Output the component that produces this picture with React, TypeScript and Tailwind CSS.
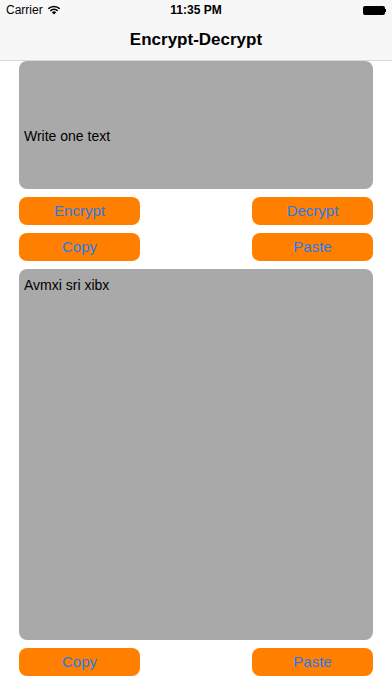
import React from "react";

const font = { fontFamily: '"Helvetica Neue", "Liberation Sans", Arial, sans-serif' };

function Btn({ label }: { label: string }) {
  return (
    <div className="w-[121px] h-[28px] rounded-[8px] bg-[#ff8000] flex items-center justify-center text-[15px] text-[#1f7bf0]">
      {label}
    </div>
  );
}

export default function App() {
  return (
    <div className="w-[392px] h-[696px] bg-white overflow-hidden" style={font}>
      <div className="bg-[#f7f7f7] border-b border-[#d8d8d8] h-[61px] flex flex-col">
        <div className="h-[20px] flex items-center justify-between px-[6px] text-[12px] text-black relative">
          <div className="flex items-center gap-[4px]">
            <span>Carrier</span>
            <svg width="14" height="10" viewBox="0 0 14 10">
              <path d="M7 9.5 L9.2 7.2 A3.2 3.2 0 0 0 4.8 7.2 Z" fill="#000" />
              <path d="M2.8 5.3 A6 6 0 0 1 11.2 5.3 L10.1 6.4 A4.5 4.5 0 0 0 3.9 6.4 Z" fill="#000" />
              <path d="M0.7 3.2 A9 9 0 0 1 13.3 3.2 L12.2 4.3 A7.5 7.5 0 0 0 1.8 4.3 Z" fill="#000" />
            </svg>
          </div>
          <span className="absolute left-1/2 -translate-x-1/2 font-semibold">11:35 PM</span>
          <div className="flex items-center">
            <div className="w-[22px] h-[9px] bg-black rounded-[2px]" />
            <div className="w-[1.5px] h-[3px] bg-black" />
          </div>
        </div>
        <div className="flex-1 flex items-center justify-center text-[17px] font-semibold text-black">
          Encrypt-Decrypt
        </div>
      </div>
      <div className="px-[19px] flex flex-col">
        <div className="h-[128px] bg-[#a9a9a9] rounded-[8px] flex items-center pt-[22px] px-[5px] text-[14px] text-black">
          Write one text
        </div>
        <div className="flex justify-between mt-[8px]">
          <Btn label="Encrypt" />
          <Btn label="Decrypt" />
        </div>
        <div className="flex justify-between mt-[8px]">
          <Btn label="Copy" />
          <Btn label="Paste" />
        </div>
        <div className="h-[371px] mt-[8px] bg-[#a9a9a9] rounded-[8px] px-[5px] pt-[6px] text-[14px] text-black">
          Avmxi sri xibx
        </div>
        <div className="flex justify-between mt-[8px]">
          <Btn label="Copy" />
          <Btn label="Paste" />
        </div>
      </div>
    </div>
  );
}
